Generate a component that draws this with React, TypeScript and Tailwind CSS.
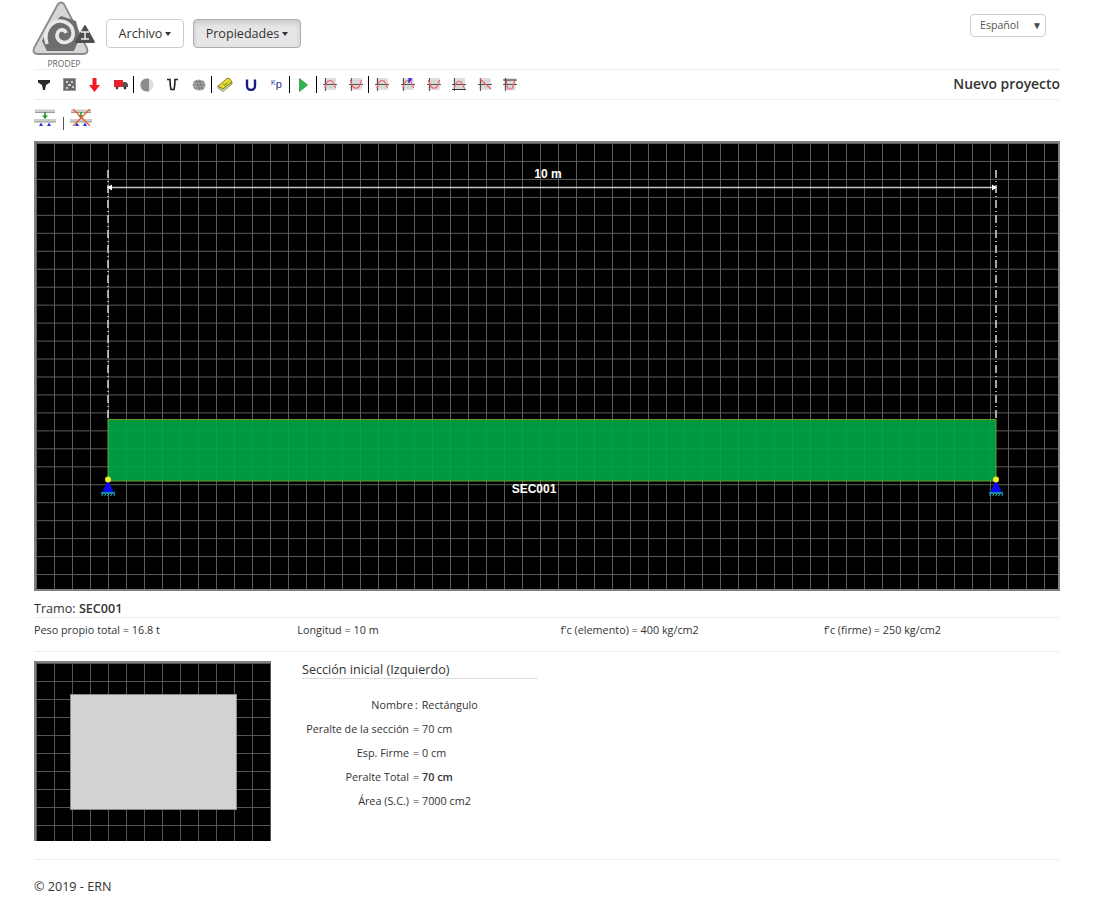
import React from 'react'

const Caret = () => (
  <span className="inline-block ml-[3px] align-middle w-0 h-0 border-t-[4px] border-t-current border-x-[3.500px] border-x-transparent" />
)

const Sep = () => <span className="w-px h-[17px] bg-black shrink-0" />

const Logo = () => (
  <svg width="64" height="56" viewBox="0 0 64 56" className="shrink-0">
    <path d="M26 3 L2 47 Q0 53 6 53 L51 53 Q57 53 55 47 L32 3 Q29 0 26 3Z" fill="#d6d6d6" stroke="#8a8a8a" strokeWidth="1.800" />
    <path d="M16 27 L29 15 L44 20 L48 36 L42 50 L15 50 L10 40Z" fill="#6e6e6e" />
    <path d="M15 43 C10 28 22 17 33 21 C43 25 44 38 35 41 C28 43 23 37 26 31 C28 28 33 28 34 32" fill="none" stroke="#e8e8e8" strokeWidth="3.600" />
    <path d="M53 25 L62 41 L44 41Z" fill="#4f4f4f" stroke="#4f4f4f" strokeWidth="1.800" strokeLinejoin="round" />
    <path d="M49 31 h8 M49 38 h8 M53 31 v7" stroke="#eee" strokeWidth="1.500" />
  </svg>
)

const ChartIcon = ({ d, extra }: { d: string; extra?: React.ReactNode }) => (
  <svg width="14" height="13" viewBox="0 0 14 13">
    <rect x="1" y="0" width="12" height="12" fill="#e4e4e4" />
    <path d="M1 3h12M1 6h12M1 9h12M4 0v12M7 0v12M10 0v12" stroke="#c4c4c4" strokeWidth="0.6" />
    <path d="M0 6.500h14M2.500 0v13" stroke="#444" strokeWidth="0.9" />
    <path d={d} fill="none" stroke="#f2606c" strokeWidth="1.200" />
    {extra}
  </svg>
)

const arch = 'M2 10 C4 0 10 0 12.500 10'
const sag = 'M1.500 2 C4 13 10 13 12.500 2'

const toolbar: React.ReactNode[] = [
  <svg width="14" height="12" viewBox="0 0 14 12"><path d="M1 1h12v2.500L9 6 8 11H6L5 6 1 3.500Z" fill="#2a2a2a" /></svg>,
  <svg width="13" height="13" viewBox="0 0 13 13"><rect x="0.500" y="0.500" width="12" height="12" fill="#6a6a6a" stroke="#999" /><path d="M3 3h2v2H3zM8 3h2v2H8zM5 6h3v2H5zM3 9h2v2H3zM9 8h2v2H9z" fill="#ccc" /></svg>,
  <svg width="11" height="14" viewBox="0 0 11 14"><path d="M3.500 0h4v7H11L5.500 14 0 7h3.500Z" fill="#f01a24" /></svg>,
  <svg width="14" height="11" viewBox="0 0 14 11"><rect x="0" y="1" width="9" height="7" fill="#e8222c" /><path d="M9 3h3l2 2v3H9Z" fill="#555" /><circle cx="3" cy="9" r="1.400" fill="#444" /><circle cx="11" cy="9" r="1.400" fill="#333" /></svg>,
  <Sep />,
  <svg width="14" height="14" viewBox="0 0 14 14"><circle cx="7" cy="7" r="6.500" fill="#ddd" /><path d="M5 0.800 A6.500 6.500 0 0 0 5 13.200 L9 13.500 L9 0.500Z" fill="#8c8c8c" /></svg>,
  <svg width="13" height="14" viewBox="0 0 13 14"><path d="M1 1.500h3c0 4 .5 8 1 10h3c.5-2 1-6 1-10h3" fill="none" stroke="#222" strokeWidth="1.600" /></svg>,
  <svg width="14" height="12" viewBox="0 0 14 12"><ellipse cx="7" cy="6" rx="6.500" ry="5.500" fill="#aaa" /><path d="M2 3h10M1 6h12M2 9h10M4 1l4 10M7 1l4 10" stroke="#666" strokeWidth="0.700" /></svg>,
  <Sep />,
  <svg width="16" height="15" viewBox="0 0 16 15"><path d="M1 9 L1 11 L6 14.500 L15 7 L15 5 L6 12Z" fill="#e8e4c4" stroke="#6b6420" strokeWidth="0.700" /><path d="M1 9 L10 1.500 Q12 0.500 13 2 L15 5 L6 12Z" fill="#ead92a" stroke="#6b6420" strokeWidth="0.800" /><path d="M6 7l2 1.500 2.500-3" fill="none" stroke="#3a9a2a" strokeWidth="1" /></svg>,
  <svg width="12" height="12" viewBox="0 0 12 12"><path d="M2 0.500V7a4 4 0 0 0 8 0V0.500" fill="none" stroke="#1a1a80" strokeWidth="2.400" /></svg>,
  <span className="text-[#2a2a9a] text-[11px] leading-none font-['Liberation_Sans',sans-serif]"><sup className="text-[7px]">K</sup>p</span>,
  <Sep />,
  <svg width="9" height="14" viewBox="0 0 9 14"><path d="M0.500 0.500L8.500 7L0.500 13.500Z" fill="#2cbb4a" stroke="#1a7a30" strokeWidth="0.600" /></svg>,
  <Sep />,
  <ChartIcon d={arch} />,
  <ChartIcon d={sag} />,
  <Sep />,
  <ChartIcon d={arch} />,
  <ChartIcon d={arch} extra={<path d="M7 0h3v2H8v3" fill="none" stroke="#1a1af0" strokeWidth="1.300" />} />,
  <ChartIcon d={sag} />,
  <ChartIcon d="M2 11 C4 1 10 1 12.500 11" extra={<path d="M0 11.500h14" stroke="#333" />} />,
  <ChartIcon d="M2 1 L13 11" />,
  <ChartIcon d="M3 2 L5 11 L9 11 L12 2" extra={<path d="M0 2h14" stroke="#333" />} />,
]

const BeamIcon = ({ crossed }: { crossed?: boolean }) => (
  <svg width="23" height="17" viewBox="0 0 23 17">
    <rect x="1" y="0.500" width="20" height="3" fill="#ccc" />
    <path d="M1 3.500h20" stroke="#999" />
    <rect x="0" y="10" width="22" height="3" fill="#ccc" />
    <path d="M0 13h22" stroke="#999" />
    <path d="M11 3v4" stroke="#1f9a38" strokeWidth="1.600" />
    <path d="M8 6.500h6l-3 3.500Z" fill="#1f9a38" />
    <path d="M5 17l2-3.500 2 3.500ZM13 17l2-3.500 2 3.500Z" fill="#2233dd" />
    {crossed && <path d="M3 0 L20 17 M20 0 L3 17" stroke="#f0522a" strokeWidth="1.200" />}
  </svg>
)

const Supports = ({ x }: { x: number }) => (
  <g>
    <path d={`M${x - 6} 492.500 L${x} 480 L${x + 6} 492.500 Z`} fill="#0a0af0" />
    <circle cx={x} cy={479.500} r="3" fill="#f2ee30" />
    <path d={`M${x - 7} 493 h14`} stroke="#19c4c4" strokeWidth="1.400" />
    <path d={`M${x - 5} 494 l-1.500 2 M${x - 2} 494 l-1.500 2 M${x + 1} 494 l-1.500 2 M${x + 4} 494 l-1.500 2 M${x + 7} 494 l-1.500 2`} stroke="#19c4c4" strokeWidth="1" />
  </g>
)

const DimLine = ({ x }: { x: number }) => (
  <path d={`M${x} 170 V419`} stroke="#cfcfcf" strokeWidth="1.600" strokeDasharray="8 3 1 3" />
)

const MainCanvas = () => (
  <div className="border-2 border-[#808080] h-[450px] bg-black overflow-hidden">
    {/* page coordinates, shifted so 36,143 is the top left corner */}
    <svg width="1022" height="446" viewBox="36 143 1022 446" className="block">
      <defs>
        <pattern id="grid" x="36" y="143" width="18" height="17.960" patternUnits="userSpaceOnUse">
          <path d="M0.500 0V18M0 0.500H18" stroke="#5c5c5c" strokeWidth="1" />
        </pattern>
      </defs>
      <rect x="36" y="143" width="1022" height="446" fill="url(#grid)" />
      <rect x="108" y="419.500" width="888" height="61.500" fill="#00a848" fillOpacity="0.900" stroke="#6f9a2c" strokeWidth="1" />
      <DimLine x={108} />
      <DimLine x={996} />
      <path d="M108 187.500H996" stroke="#c4c4c4" strokeWidth="1.500" />
      <path d="M107 187.500l5-3v6ZM997 187.500l-5-3v6Z" fill="#fff" />
      <text x="548" y="178" textAnchor="middle" fill="#fff" fontSize="12" fontWeight="700" fontFamily="Liberation Sans, sans-serif">10 m</text>
      <text x="534" y="493" textAnchor="middle" fill="#fff" fontSize="12" fontWeight="700" fontFamily="Liberation Sans, sans-serif">SEC001</text>
      <Supports x={108} />
      <Supports x={996} />
    </svg>
  </div>
)

const SectionCanvas = () => (
  <div className="w-[237px] h-[180px] shrink-0 border-t-2 border-l-2 border-[#808080] bg-black overflow-hidden">
    <svg width="235" height="178" viewBox="0 0 235 178" className="block">
      <defs>
        <pattern id="grid2" width="18" height="18" patternUnits="userSpaceOnUse">
          <path d="M0.500 0V18M0 0.500H18" stroke="#555" strokeWidth="1" />
        </pattern>
      </defs>
      <rect width="235" height="178" fill="url(#grid2)" />
      <rect x="34.500" y="31.500" width="166" height="115" fill="#d2d2d2" stroke="#8a8a8a" />
    </svg>
  </div>
)

const rows: [string, React.ReactNode][] = [
  ['Nombre', <span className="pl-[2px]">: <span className="ml-[1px]">Rectángulo</span></span>],
  ['Peralte de la sección', '= 70 cm'],
  ['Esp. Firme', '= 0 cm'],
  ['Peralte Total', <>= <b className="font-semibold">70 cm</b></>],
  ['Área (S.C.)', '= 7000 cm2'],
]

const App = () => {
  return (
    <div className="w-full min-h-[900px] bg-white pl-[34px] pr-[35px] font-['Open_Sans',sans-serif] text-[#333] text-[14px]">
      <header className="h-[69px] flex items-start border-b border-[#eee] box-content">
        <div className="w-[64px] -ml-[2px] pt-[1px] flex flex-col items-center shrink-0">
          <Logo />
          <span className="text-[8.500px] leading-[10px] text-[#666] mt-[2px]">PRODEP</span>
        </div>
        <div className="flex gap-[9px] ml-[10px] mt-[19px]">
          <button className="h-[29px] w-[78px] pt-px rounded border border-[#ccc] bg-white text-[#333] text-[12.600px] whitespace-nowrap">
            Archivo<Caret />
          </button>
          <button className="h-[29px] w-[108px] pt-px rounded border border-[#adadad] bg-[#e6e6e6] shadow-[inset_0_3px_5px_rgba(0,0,0,0.125)] text-[#333] text-[12.600px] whitespace-nowrap">
            Propiedades<Caret />
          </button>
        </div>
        <div className="ml-auto mr-[14px] mt-[14px] w-[76px] h-[23px] rounded border border-[#ccc] flex items-center justify-between pl-[9px] pr-[3px] text-[10.600px] text-[#555]">
          <span>Español</span>
          <span className="text-[10px] text-[#444]">▼</span>
        </div>
      </header>

      <div className="h-[30px] flex items-center border-b border-[#eee]">
        <div className="flex items-center -ml-[3px]">
          {toolbar.map((item, i) =>
            <span key={i} className={i === 4 || i === 8 || i === 12 || i === 14 || i === 17 ? 'w-[1.200px] flex' : 'w-[25.600px] flex justify-center items-center'}>{item}</span>
          )}
        </div>
        <b className="ml-auto font-semibold text-[13.900px]">Nuevo proyecto</b>
      </div>

      <div className="h-[41px] flex items-start pt-[9px] gap-[6px]">
        <BeamIcon />
        <span className="w-px h-[13px] bg-[#555] mt-[8px]" />
        <BeamIcon crossed />
      </div>

      <MainCanvas />

      <div className="h-[27px] flex items-end border-b border-[#eee] text-[12.600px] leading-[17px]">
        <span>Tramo: <b className="font-semibold">SEC001</b></span>
      </div>
      <div className="h-[34px] flex pt-[4px] border-b border-[#eee] text-[10.800px] leading-[16px]">
        <span className="w-[263.300px]">Peso propio total = 16.8 t</span>
        <span className="w-[263.300px]">Longitud = 10 m</span>
        <span className="w-[263.300px]">f'c (elemento) = 400 kg/cm2</span>
        <span>f'c (firme) = 250 kg/cm2</span>
      </div>

      <section className="flex pt-[9px] h-[208px] border-b border-[#eee]">
        <SectionCanvas />
        <div className="ml-[31px] w-[236px]">
          <div className="h-[18px] border-b border-[#ddd] text-[12.600px] leading-[17px]">Sección inicial (Izquierdo)</div>
          <div className="mt-[14px] grid grid-cols-[107px_auto] gap-x-[4px] auto-rows-[24px] text-[10.800px] leading-[24px] whitespace-nowrap">
            {rows.map(([label, value], i) => (
              <React.Fragment key={i}>
                <span className={i === 0 ? 'text-right -mr-[4px]' : 'text-right'}>{label}</span>
                <span>{value}</span>
              </React.Fragment>
            ))}
          </div>
        </div>
      </section>

      <footer className="pt-[17px] text-[12.600px] leading-[20px]">© 2019 - ERN</footer>
    </div>
  )
}

export default App
